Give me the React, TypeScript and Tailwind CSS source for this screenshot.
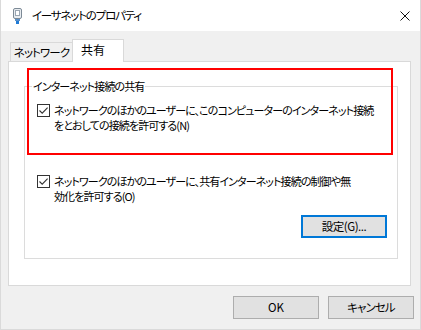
import React from "react";

const uiFont = {
  fontFamily: '"Noto Sans CJK JP", "Noto Sans", sans-serif',
};

function CheckBox() {
  return (
    <span className="flex h-[13px] w-[13px] shrink-0 items-center justify-center border border-[#333333] bg-white">
      <svg width="11" height="11" viewBox="0 0 11 11">
        <path d="M1.5 5.5 L4.2 8.2 L9.6 2.6" fill="none" stroke="#333333" strokeWidth="1.1" />
      </svg>
    </span>
  );
}

function EthernetIcon() {
  return (
    <svg width="9" height="16" viewBox="0 0 9 16">
      <rect x="0.5" y="0.5" width="8" height="10" rx="1.5" fill="#e8ecf0" stroke="#7d8a96" />
      <rect x="2.5" y="2.5" width="4" height="5" fill="#ffffff" stroke="#9aa6b2" />
      <rect x="2" y="11" width="5" height="2" fill="#5b8fc7" />
      <rect x="3" y="13" width="3" height="3" fill="#1f7bd6" />
    </svg>
  );
}

export default function App() {
  return (
    <div
      className="flex h-[330px] w-[421px] flex-col overflow-hidden border-x border-b border-[#dadada] bg-[#f0f0f0] text-[11px] tracking-[-0.9px] text-black [font-feature-settings:'palt']"
      style={uiFont}
    >
      {/* Title bar */}
      <div className="flex h-[31px] shrink-0 items-center bg-white">
        <span className="ml-[12px] flex w-[9px] items-center">
          <EthernetIcon />
        </span>
        <span className="ml-[10px] whitespace-nowrap text-[11.5px] tracking-[-1.2px] leading-none">
          イーサネットのプロパティ
        </span>
        <span className="ml-auto mr-[10px] flex h-[10px] w-[10px] items-center justify-center">
          <svg width="10" height="10" viewBox="0 0 10 10">
            <path d="M0.5 0.5 L9.5 9.5 M9.5 0.5 L0.5 9.5" stroke="#111111" strokeWidth="1" />
          </svg>
        </span>
      </div>

      <div className="px-[7px] pt-[8px]">
        {/* Tabs */}
        <div className="flex h-[23px] items-end">
          <div className="ml-[2px] flex h-[20px] w-[62px] items-center justify-center whitespace-nowrap border-l border-t border-[#d9d9d9] bg-[#f0f0f0] pt-[1px] text-[11.5px] leading-none">
            ネットワーク
          </div>
          <div className="relative z-10 flex h-[23px] w-[52px] items-center whitespace-nowrap border-x border-t border-[#d9d9d9] bg-white pb-[2px] pl-[8px] text-[12px] tracking-normal leading-none">
            共有
          </div>
        </div>

        {/* Panel */}
        <div className="relative -mt-[1px] h-[225px] w-[403px] border border-[#d9d9d9] bg-white">
          <div className="relative ml-[15px] mt-[24px] flex h-[173px] w-[374px] flex-col border border-[#dcdcdc]">
            <span className="absolute -top-[8px] left-[7px] whitespace-nowrap bg-white px-[1px] leading-[15px]">
              インターネット接続の共有
            </span>

            <div className="ml-[12px] mt-[16px] flex items-start gap-[4px]">
              <span className="mt-[1px]">
                <CheckBox />
              </span>
              <div className="leading-[15px]">
                <div className="whitespace-nowrap">
                  ネットワークのほかのユーザーに、このコンピューターのインターネット接続
                </div>
                <div className="whitespace-nowrap">をとおしての接続を許可する(N)</div>
              </div>
            </div>

            <div className="ml-[12px] mt-[41px] flex items-start gap-[4px]">
              <span className="mt-[1px]">
                <CheckBox />
              </span>
              <div className="leading-[15px]">
                <div className="whitespace-nowrap">
                  ネットワークのほかのユーザーに、共有インターネット接続の制御や無
                </div>
                <div className="whitespace-nowrap">効化を許可する(O)</div>
              </div>
            </div>

            <div className="mr-[10px] mt-[11px] flex justify-end">
              <button className="flex h-[23px] w-[86px] items-center justify-center whitespace-nowrap border-2 border-[#0078d7] bg-[#e1e1e1] text-[11.5px] tracking-[-0.5px] leading-none">
                設定(G)...
              </button>
            </div>
          </div>

          {/* red annotation frame */}
          <div className="pointer-events-none absolute left-[18px] top-[6px] h-[87px] w-[366px] border-2 border-[#ff0000]" />
        </div>

        {/* Dialog buttons */}
        <div className="mr-[-1px] mt-[10px] flex justify-end gap-[9px]">
          <button className="flex h-[23px] w-[86px] items-center justify-center border border-[#adadad] bg-[#e1e1e1] text-[11.5px] tracking-normal leading-none">
            OK
          </button>
          <button className="flex h-[23px] w-[86px] items-center justify-center whitespace-nowrap border border-[#adadad] bg-[#e1e1e1] text-[11.5px] leading-none">
            キャンセル
          </button>
        </div>
      </div>
    </div>
  );
}
